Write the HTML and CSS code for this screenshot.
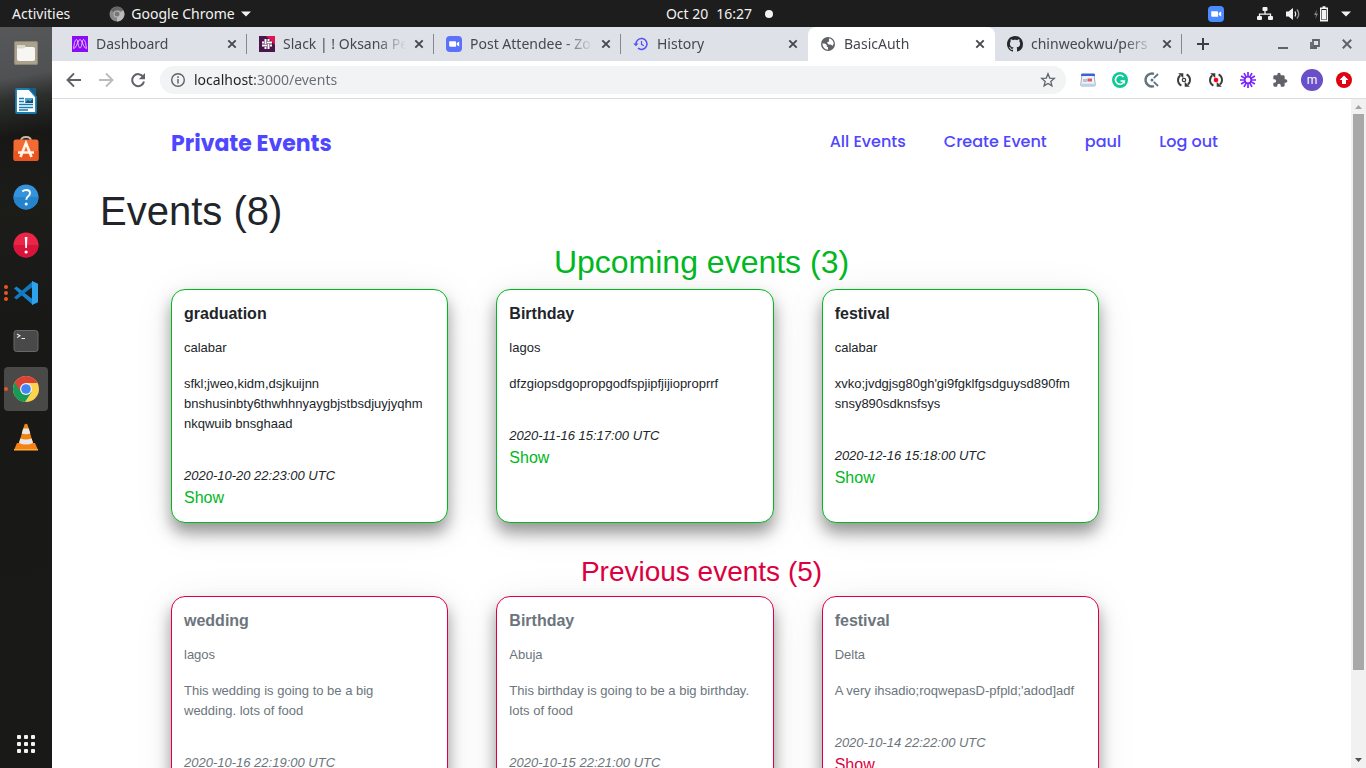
FILE: index.html
```html
<!DOCTYPE html>
<html lang="en">
<head>
<meta charset="utf-8">
<title>BasicAuth</title>
<link rel="stylesheet" href="styles.css">
</head>
<body>
<svg class="defs" aria-hidden="true">
  <symbol id="close" viewBox="0 0 10 10"><path d="M1.3 1.3l7.4 7.4M8.7 1.3L1.3 8.7" stroke="#45484d" stroke-width="1.9" fill="none"/></symbol>
  <symbol id="zoomcam" viewBox="0 0 16 16"><path d="M3.2 5.3h5.6c.8 0 1.3.5 1.3 1.3v4.2H4.600c-.8 0-1.400-.5-1.400-1.300zM10.800 7.100l2.400-1.700v5.200l-2.400-1.700z" fill="#fff"/></symbol>
  <symbol id="sync" viewBox="0 0 16 16"><path d="M5.400 13.700A6.200 6.200 0 0 1 4.200 3.400M10.600 2.300A6.200 6.200 0 0 1 11.800 12.600" fill="none" stroke="#3c3c3c" stroke-width="1.900"/><path d="M2.200 1.200h5.100v5.100zM13.800 14.800H8.700V9.700z" fill="#3c3c3c"/></symbol>
</svg>
<div class="desktop">
  <header class="topbar">
    <div class="topbar-left">
      <button class="topbar-button">Activities</button>
      <button class="topbar-button app-menu">
        <svg width="16" height="16" viewBox="0 0 16 16"><circle cx="8" cy="8" r="7.500" fill="#888"/><path d="M8 8l-6.500-3.700A7.500 7.500 0 0 1 14.500 4.500H8z" fill="#666"/><path d="M8 8l6.500-3.500A7.500 7.500 0 0 1 8 15.500z" fill="#bbb"/><circle cx="8" cy="8" r="3.500" fill="#bbb"/><circle cx="8" cy="8" r="2.500" fill="#777"/></svg>
        Google Chrome
        <svg width="10" height="6" viewBox="0 0 10 6"><path d="M0 .5h10L5 5.500z" fill="#f2f2f2"/></svg>
      </button>
    </div>
    <div class="clock"><span>Oct 20</span><time>16:27</time><i class="clock-dot"></i></div>
    <div class="tray">
      <svg class="tray-zoom" width="16" height="16" viewBox="0 0 16 16"><rect width="16" height="16" rx="4" fill="#4a8cff"/><use href="#zoomcam"/></svg>
      <svg width="16" height="14" viewBox="0 0 16 14"><path d="M8 3v4M2.500 10V7.200h11V10" fill="none" stroke="#f2f2f2" stroke-width="1.300"/><rect x="5.500" y="0" width="5" height="4" rx="1" fill="#f2f2f2"/><rect x="0" y="9" width="5" height="4" rx="1" fill="#f2f2f2"/><rect x="11" y="9" width="5" height="4" rx="1" fill="#f2f2f2"/></svg>
      <svg width="16" height="14" viewBox="0 0 16 14"><path d="M1 4.500h2.500L8 1v12L3.500 9.500H1z" fill="#f2f2f2"/><path d="M10 4.500q1.500 2.500 0 5" fill="none" stroke="#f2f2f2" stroke-width="1.300"/><path d="M12 2.500q3.500 4.500 0 9" fill="none" stroke="#999" stroke-width="1.300"/></svg>
      <svg width="16" height="16" viewBox="0 0 16 16"><path d="M4 3.500L1 9h2l-.7 4L5 7.500H3z" fill="#888"/><path d="M7.700 2.200h6.600v12.600H7.700zM9.500 1h3" fill="none" stroke="#f2f2f2" stroke-width="1.400"/><path d="M9 4h4v9.500H9z" fill="#f2f2f2"/></svg>
      <svg width="10" height="6" viewBox="0 0 10 6"><path d="M0 .5h10L5 5.500z" fill="#f2f2f2"/></svg>
    </div>
  </header>

  <nav class="dock" aria-label="Dock">
    <button class="dock-item" aria-label="Files"><svg width="26" height="26" viewBox="0 0 26 26"><rect x="1" y="1" width="24" height="24" rx="2.500" fill="#aaa18f"/><rect x="1.500" y="1.500" width="23" height="23" rx="2" fill="none" stroke="#8b8474"/><path d="M4 6.500Q4 5 5.500 5h5q1.500 0 2 2h7.500Q22 7 22 9v10q0 2-2 2H6q-2 0-2-2z" fill="#f8f6f2"/><path d="M4 8.500V6.500Q4 5 5.500 5h5q1.500 0 2 2-1.500 1.500-3 1.500z" fill="#ddd8cd"/></svg></button>
    <button class="dock-item" aria-label="Writer"><svg width="26" height="26" viewBox="0 0 26 26"><path d="M3 2q0-1 1-1h12l7 8v15q0 1-1 1H4q-1 0-1-1z" fill="#fff" stroke="#1a7bb0" stroke-width="1.800"/><path d="M15.500 0H23v7.500z" fill="#185f88"/><path d="M6 10.500h5M6 13.500h5M6 16.500h14M6 19.500h14M6 22h9" stroke="#1a7bb0" stroke-width="1.300"/><path d="M12 10h8v5h-8z" fill="#4da1cf"/><path d="M12 15l3-3 2 1.500L20 11v4z" fill="#135374"/></svg></button>
    <button class="dock-item" aria-label="Software"><svg width="26" height="26" viewBox="0 0 26 26"><path d="M8 5q0-4 5-4t5 4" fill="none" stroke="#c9bd9f" stroke-width="1.800"/><rect x="0.500" y="3.500" width="25" height="21.500" rx="2.500" fill="#f36b32"/><path d="M.5 15h25v7.500q0 2.500-2.500 2.500H3Q.5 25 .5 22.500z" fill="#e95420"/><path d="M7.500 21l5.500-14 5.500 14M5 16.500h16" fill="none" stroke="#fff4e8" stroke-width="2.600"/></svg></button>
    <button class="dock-item" aria-label="Help"><svg width="26" height="26" viewBox="0 0 26 26"><circle cx="13" cy="13" r="12.500" fill="#3593de"/><path d="M.5 13a12.500 12.500 0 0 0 25 0z" fill="#2583cc"/><path d="M9.300 7.500q1.700-1.500 4-1.500 3.700 0 3.700 3.200 0 1.800-2 3.300-1.700 1.300-1.700 3.300" fill="none" stroke="#fff" stroke-width="1.900"/><circle cx="13.200" cy="20" r="1.500" fill="#fff"/></svg></button>
    <button class="dock-item" aria-label="Problem report"><svg width="26" height="26" viewBox="0 0 26 26"><circle cx="13" cy="13" r="12.500" fill="#e92548"/><path d="M.5 13a12.500 12.500 0 0 0 25 0z" fill="#d8143a"/><path d="M11.800 5h2.600l-.5 11h-1.600z" fill="#fff"/><circle cx="13.100" cy="20" r="1.600" fill="#fff"/></svg></button>
    <button class="dock-item" aria-label="Visual Studio Code"><span class="dots"><i></i><i></i><i></i></span><svg width="26" height="26" viewBox="0 0 26 26"><path d="M1 8.500l2.500-2L20 19v6z" fill="#1583cd"/><path d="M1 17.500l2.500 2L20 7V1z" fill="#1079c0"/><path d="M19 1l6 2.800v18.400L19 25z" fill="#2ea3ec"/><path d="M19 7.500v11L11.500 13z" fill="#1b1b1a"/></svg></button>
    <button class="dock-item" aria-label="Terminal"><svg width="26" height="26" viewBox="0 0 26 26"><rect x="1" y="2.500" width="24" height="21" rx="2.500" fill="#494949" stroke="#686868"/><path d="M4 6l3 1.800L4 9.600M8.500 10.500H12" fill="none" stroke="#eee" stroke-width="1.100"/></svg></button>
    <button class="dock-item dock-item-active" aria-label="Google Chrome"><span class="dots"><i></i></span><svg width="26" height="26" viewBox="0 0 26 26"><circle cx="13" cy="13" r="13" fill="#fcd24f"/><path d="M13 13L1.700 6.600A13 13 0 0 0 12 26l6.500-10z" fill="#159b57"/><path d="M13 7h11.500A13 13 0 0 0 1.700 6.600l5.500 8.500z" fill="#da4437"/><circle cx="13" cy="13" r="6" fill="#f4f4f4"/><circle cx="13" cy="13" r="4.800" fill="#4285f4"/></svg></button>
    <button class="dock-item" aria-label="VLC"><svg width="26" height="28" viewBox="0 0 26 28"><path d="M4 20h18l3 7H1z" fill="#f58216"/><path d="M1 26h24v1.500H1z" fill="#ffae35"/><path d="M11.500 1.500q1.500-1.500 3 0L20 20q-7 3-14 0z" fill="#f28313"/><path d="M10.200 5.500h5.600l1.500 5q-4.300 1.500-8.600 0zM7.300 15.500q5.700 2 11.400 0l1.300 4.500q-7 3-14 0z" fill="#e8e8e8"/></svg></button>
    <button class="dock-item dock-apps" aria-label="Show applications"><svg width="20" height="20" viewBox="0 0 20 20" fill="#f2f2f2"><rect x="1" y="1" width="4" height="4" rx="1"/><rect x="8" y="1" width="4" height="4" rx="1"/><rect x="15" y="1" width="4" height="4" rx="1"/><rect x="1" y="8" width="4" height="4" rx="1"/><rect x="8" y="8" width="4" height="4" rx="1"/><rect x="15" y="8" width="4" height="4" rx="1"/><rect x="1" y="15" width="4" height="4" rx="1"/><rect x="8" y="15" width="4" height="4" rx="1"/><rect x="15" y="15" width="4" height="4" rx="1"/></svg></button>
  </nav>

  <div class="browser">
    <div class="tabstrip">
      <div class="tab tab-sep">
        <svg width="16" height="16" viewBox="0 0 16 16"><path d="M0 0h16v16H0z" fill="#8c0cf5"/><path d="M1.500 12.500C2.200 8 3 3.500 4.500 3.500S6 12 8 12s2-8.500 3.500-8.500 2.300 4.500 3 9M1.500 12.500c3 0 4.500-9 6.500-9s3.500 9 6.500 9" fill="none" stroke="#e9d0ff" stroke-width=".9"/></svg>
        <span class="tab-title">Dashboard</span>
        <button class="tab-close" aria-label="Close tab"><svg width="10" height="10"><use href="#close"/></svg></button>
      </div>
      <div class="tab tab-sep">
        <svg width="16" height="16" viewBox="0 0 16 16"><path d="M0 0h16v16H0z" fill="#4a154b"/><path d="M7 0h9v9z" fill="#de1453"/><path d="M6.500 3v5M9.500 8v5M3 9.500h5M8 6.500h5M9.500 3v2M6.500 11v2M3 6.500h2M11 9.500h2" stroke="#fff" stroke-width="2"/></svg>
        <span class="tab-title">Slack | ! Oksana Pe</span>
        <button class="tab-close" aria-label="Close tab"><svg width="10" height="10"><use href="#close"/></svg></button>
      </div>
      <div class="tab tab-sep">
        <svg width="16" height="16" viewBox="0 0 16 16"><rect width="16" height="16" rx="4" fill="#5b71fb"/><use href="#zoomcam"/></svg>
        <span class="tab-title">Post Attendee - Zo</span>
        <button class="tab-close" aria-label="Close tab"><svg width="10" height="10"><use href="#close"/></svg></button>
      </div>
      <div class="tab">
        <svg width="16" height="16" viewBox="0 0 16 16"><path d="M3 8.500A5.500 5.500 0 1 1 5 12.200" fill="none" stroke="#5450f5" stroke-width="1.500"/><path d="M.2 7.500h5.300L2.900 10.300z" fill="#5450f5"/><path d="M8.500 5v3.300l2.300 1.500" fill="none" stroke="#5450f5" stroke-width="1.200"/></svg>
        <span class="tab-title">History</span>
        <button class="tab-close" aria-label="Close tab"><svg width="10" height="10"><use href="#close"/></svg></button>
      </div>
      <div class="tab tab-active">
        <svg width="16" height="16" viewBox="0 0 16 16"><circle cx="8" cy="8" r="7" fill="#5f6368"/><path d="M2.300 7.500h2.500l2 1.500v2H8v2.800Q3 13.500 2.300 7.500zM9 2.200q4 1 4.700 5.300l-1 2.200-2-1.200H8.500L7 6.500l2-1z" fill="#fff"/></svg>
        <span class="tab-title">BasicAuth</span>
        <button class="tab-close" aria-label="Close tab"><svg width="10" height="10"><use href="#close"/></svg></button>
      </div>
      <div class="tab tab-sep">
        <svg width="16" height="16" viewBox="0 0 16 16"><path fill="#24292e" d="M8 0C3.580 0 0 3.580 0 8c0 3.540 2.290 6.530 5.470 7.590.4.070.55-.17.55-.38 0-.19-.01-.82-.01-1.490-2.010.37-2.530-.49-2.690-.94-.09-.23-.48-.94-.82-1.130-.28-.15-.68-.52-.01-.53.63-.01 1.080.58 1.230.82.72 1.210 1.870.87 2.330.66.07-.52.28-.87.51-1.070-1.780-.2-3.640-.89-3.640-3.950 0-.87.31-1.590.82-2.150-.08-.2-.36-1.020.08-2.120 0 0 .67-.21 2.200.82.64-.18 1.320-.27 2-.27s1.360.09 2 .27c1.530-1.040 2.200-.82 2.200-.82.44 1.100.16 1.920.08 2.120.51.56.82 1.270.82 2.150 0 3.070-1.870 3.750-3.650 3.950.29.25.54.73.54 1.480 0 1.070-.01 1.930-.01 2.200 0 .21.15.46.55.38A8.010 8.010 0 0 0 16 8c0-4.420-3.580-8-8-8z"/></svg>
        <span class="tab-title">chinweokwu/pers</span>
        <button class="tab-close" aria-label="Close tab"><svg width="10" height="10"><use href="#close"/></svg></button>
      </div>
      <button class="icon-button new-tab" aria-label="New tab"><svg width="12" height="12" viewBox="0 0 12 12"><path d="M6 0v12M0 6h12" stroke="#3c4043" stroke-width="2"/></svg></button>
      <div class="window-controls">
        <button class="icon-button" aria-label="Minimize"><svg width="10" height="10" viewBox="0 0 10 10"><path d="M0 9h10" stroke="#5f6368" stroke-width="2"/></svg></button>
        <button class="icon-button" aria-label="Restore"><svg width="10" height="10" viewBox="0 0 10 10"><path d="M3 1h6v6H3zM1 3v6h6" fill="none" stroke="#5f6368" stroke-width="1.800"/></svg></button>
        <button class="icon-button" aria-label="Close window"><svg width="10" height="10" viewBox="0 0 10 10"><path d="M.8.8l8.400 8.400M9.200.8L.8 9.200" stroke="#5f6368" stroke-width="2"/></svg></button>
      </div>
    </div>

    <div class="toolbar">
      <div class="toolbar-nav">
        <button class="icon-button" aria-label="Back"><svg width="16" height="16" viewBox="0 0 16 16"><path d="M15 8H2M8 1.500L1.500 8 8 14.500" fill="none" stroke="#5f6368" stroke-width="1.900"/></svg></button>
        <button class="icon-button" aria-label="Forward" disabled><svg width="16" height="16" viewBox="0 0 16 16"><path d="M1 8h13M8 1.500L14.500 8 8 14.500" fill="none" stroke="#babcbe" stroke-width="1.900"/></svg></button>
        <button class="icon-button" aria-label="Reload"><svg width="16" height="16" viewBox="0 0 16 16"><path d="M13.300 5A6 6 0 1 0 14 9.500" fill="none" stroke="#5f6368" stroke-width="2"/><path d="M15 1v6.200H8.800z" fill="#5f6368"/></svg></button>
      </div>
      <div class="omnibox">
        <svg width="16" height="16" viewBox="0 0 16 16"><circle cx="8" cy="8" r="6.300" fill="none" stroke="#5f6368" stroke-width="1.400"/><path d="M8 7v4.500M8 4.300v1.600" stroke="#5f6368" stroke-width="1.500"/></svg>
        <input class="url" type="text" aria-label="Address" value="localhost:3000/events">
        <button class="star" aria-label="Bookmark"><svg width="16" height="16" viewBox="0 0 16 16"><path d="M8 1.800l1.700 4.300 4.600.3-3.500 3 1.100 4.500L8 11.400l-3.900 2.500 1.100-4.500-3.500-3 4.600-.3z" fill="none" stroke="#5f6368" stroke-width="1.300"/></svg></button>
      </div>
      <div class="extensions">
        <button class="icon-button" aria-label="Calendar"><svg width="16" height="16" viewBox="0 0 16 16"><path d="M2 2.500h12l1.300 10.500q0 1-1 1H1.700q-1 0-1-1z" fill="#eef3fb" stroke="#9fb0c6"/><path d="M2 1.500h12q1 0 1 1.500v1H1V3q0-1.500 1-1.500z" fill="#3a62d4"/><path d="M3 7h4v3H3z" fill="#c2c0ca"/><path d="M7.500 6.500h4.500v3H7.500z" fill="#de5a64"/><path d="M2 12.500h12" stroke="#b4d3ec" stroke-width="1.500"/></svg></button>
        <button class="icon-button" aria-label="Grammarly"><svg width="16" height="16" viewBox="0 0 16 16"><circle cx="8" cy="8" r="8" fill="#11c998"/><path d="M11.500 5A4.500 4.500 0 1 0 12.300 9H8.500" fill="none" stroke="#fff" stroke-width="1.600"/><path d="M10 9h3v3z" fill="#fff"/></svg></button>
        <button class="icon-button" aria-label="Clockify"><svg width="16" height="16" viewBox="0 0 16 16"><path d="M10 1.800A6.500 6.500 0 1 0 10 14.200" fill="none" stroke="#607481" stroke-width="2.400"/><path d="M9.800 6.200L14 2M9.800 9.800L14 14" stroke="#607481" stroke-width="1.800"/><circle cx="8" cy="8" r="1.500" fill="#607481"/></svg></button>
        <button class="icon-button" aria-label="Recorder"><svg width="16" height="16" viewBox="0 0 16 16"><use href="#sync"/><circle cx="8" cy="8" r="1.700" fill="none" stroke="#3c3c3c" stroke-width="1.200"/></svg></button>
        <button class="icon-button" aria-label="Recording"><svg width="16" height="16" viewBox="0 0 16 16"><use href="#sync"/><circle cx="8" cy="8" r="2.300" fill="#f00"/></svg></button>
        <button class="icon-button" aria-label="Loom"><svg width="16" height="16" viewBox="0 0 16 16"><path d="M8 0v16M0 8h16M4 1.070l8 13.860M1.070 4l13.860 8M12 1.070L4 14.930M14.930 4L1.070 12" stroke="#7d22ff" stroke-width="1.700"/><circle cx="8" cy="8" r="3.200" fill="#fff" stroke="#7d22ff" stroke-width="1.600"/></svg></button>
        <button class="icon-button" aria-label="Extensions"><svg width="16" height="16" viewBox="0 0 24 24"><path fill="#5f6368" d="M20.500 11H19V7c0-1.100-.9-2-2-2h-4V3.500a2.500 2.500 0 0 0-5 0V5H4c-1.100 0-2 .9-2 2v3.800h1.500a2.700 2.700 0 0 1 0 5.400H2V20c0 1.100.9 2 2 2h3.800v-1.500a2.700 2.700 0 0 1 5.400 0V22H17c1.100 0 2-.9 2-2v-4h1.500a2.500 2.500 0 0 0 0-5z"/></svg></button>
        <button class="icon-button" aria-label="Profile"><span class="avatar">m</span></button>
        <button class="icon-button" aria-label="Update"><svg width="16" height="16" viewBox="0 0 16 16"><circle cx="8" cy="8" r="8" fill="#e00012"/><path d="M8 3.500L12.500 8H10v4H6V8H3.500z" fill="#fff"/></svg></button>
      </div>
    </div>

    <div class="viewport">
      <div class="page">
        <nav class="site-nav">
          <a class="brand" href="#">Private Events</a>
          <div class="site-links">
            <a href="#">All Events</a>
            <a href="#">Create Event</a>
            <a href="#">paul</a>
            <a href="#">Log out</a>
          </div>
        </nav>
        <main>
          <h1>Events (8)</h1>
          <section class="upcoming">
            <h2>Upcoming events (3)</h2>
            <div class="cards">
              <article class="card">
                <h4>graduation</h4>
                <p>calabar</p>
                <p class="description">sfkl;jweo,kidm,dsjkuijnn bnshusinbty6thwhhnyaygbjstbsdjuyjyqhm nkqwuib bnsghaad</p>
                <em>2020-10-20 22:23:00 UTC</em>
                <a href="#">Show</a>
              </article>
              <article class="card">
                <h4>Birthday</h4>
                <p>lagos</p>
                <p class="description">dfzgiopsdgopropgodfspjipfjijioproprrf</p>
                <em>2020-11-16 15:17:00 UTC</em>
                <a href="#">Show</a>
              </article>
              <article class="card">
                <h4>festival</h4>
                <p>calabar</p>
                <p class="description">xvko;jvdgjsg80gh'gi9fgklfgsdguysd890fm snsy890sdknsfsys</p>
                <em>2020-12-16 15:18:00 UTC</em>
                <a href="#">Show</a>
              </article>
            </div>
          </section>
          <section class="previous">
            <h3>Previous events (5)</h3>
            <div class="cards">
              <article class="card">
                <h4>wedding</h4>
                <p>lagos</p>
                <p class="description">This wedding is going to be a big wedding. lots of food</p>
                <em>2020-10-16 22:19:00 UTC</em>
                <a href="#">Show</a>
              </article>
              <article class="card">
                <h4>Birthday</h4>
                <p>Abuja</p>
                <p class="description">This birthday is going to be a big birthday. lots of food</p>
                <em>2020-10-15 22:21:00 UTC</em>
                <a href="#">Show</a>
              </article>
              <article class="card">
                <h4>festival</h4>
                <p>Delta</p>
                <p class="description">A very ihsadio;roqwepasD-pfpld;'adod]adf</p>
                <em>2020-10-14 22:22:00 UTC</em>
                <a href="#">Show</a>
              </article>
            </div>
          </section>
        </main>
      </div>
      <div class="scrollbar" aria-hidden="true">
        <svg width="15" height="15" viewBox="0 0 15 15"><path d="M4 10h7L7.500 6z" fill="#a3a3a3"/></svg>
        <div class="scroll-track"><div class="scroll-thumb"></div></div>
        <svg width="15" height="15" viewBox="0 0 15 15"><path d="M4 5h7L7.500 9z" fill="#505050"/></svg>
      </div>
    </div>
  </div>
</div>
</body>
</html>
```
FILE: styles.css
```css
* { box-sizing: border-box; }
body { margin: 0; font-family: "Liberation Sans", Arial, sans-serif; color: #212529; }
button { border: 0; padding: 0; background: none; font: inherit; color: inherit; }
svg { display: block; flex: none; }
a { text-decoration: none; }
.defs { display: none; }

.desktop {
  display: grid;
  grid-template: 27px minmax(0, 1fr) / 52px minmax(0, 1fr);
  height: 100vh;
  overflow: hidden;
}

/* System bar */
.topbar {
  grid-column: 1 / -1;
  display: grid;
  grid-template-columns: 1fr auto 1fr;
  align-items: center;
  padding: 0 15px 0 12px;
  background: #1d1d1d;
  color: #f2f2f2;
  font: 14px/20px "Noto Sans", sans-serif;
}
.topbar-left { display: flex; gap: 39px; }
.topbar-button { display: flex; align-items: center; gap: 6px; }
.clock { display: flex; align-items: center; gap: 8px; padding-left: 76px; white-space: nowrap; }
.clock-dot { width: 8px; height: 8px; margin-left: 5px; border-radius: 50%; background: #f2f2f2; }
.tray { display: flex; align-items: center; justify-content: flex-end; gap: 12px; }
.tray-zoom { margin-right: 21px; }

/* Dock */
.dock {
  display: flex;
  flex-direction: column;
  align-items: center;
  gap: 4px;
  padding: 4px 0 2px;
  background: linear-gradient(170deg, #57585a 0, #505153 52px, #2c2f2c 74px, #171716 110px, #1c1c19 180px, #181817 300px, #191918 100%);
}
.dock-item {
  position: relative;
  display: flex;
  align-items: center;
  justify-content: center;
  width: 44px;
  height: 44px;
  border-radius: 4px;
}
.dock-item-active { background: #494947; }
.dock-apps { margin-top: auto; }
.dots { position: absolute; left: 0; display: grid; gap: 2px; }
.dots i { width: 4px; height: 4px; border-radius: 50%; background: #e95420; }

/* Browser frame */
.browser { display: flex; flex-direction: column; min-height: 0; background: #fff; }
.tabstrip { display: flex; height: 34px; padding-left: 8px; background: #dee1e8; flex: none; }
.tab {
  position: relative;
  display: flex;
  align-items: center;
  gap: 8px;
  flex: 0 1 187px;
  min-width: 0;
  padding: 0 10px 0 12px;
  color: #45484d;
  font: 14px/20px "Noto Sans", sans-serif;
}
.tab-sep::after { content: ""; position: absolute; right: 0; top: 7px; width: 1px; height: 20px; background: #85888e; }
.tab-active { background: #fff; border-radius: 8px 8px 0 0; }
.tab-title {
  flex: 1;
  min-width: 0;
  white-space: nowrap;
  mask-image: linear-gradient(90deg, #000 76%, transparent);
}
.tab-close { display: grid; place-items: center; width: 10px; height: 20px; }
.icon-button { display: grid; place-items: center; width: 32px; height: 100%; }
.new-tab { margin-left: 5px; }
.window-controls { display: flex; margin-left: auto; padding-right: 3px; }
.toolbar { display: flex; align-items: center; height: 38px; padding: 0 6px; border-bottom: 1px solid #dcdce4; flex: none; }
.toolbar-nav { display: flex; padding-right: 6px; }
.omnibox {
  flex: 1;
  display: flex;
  align-items: center;
  gap: 8px;
  height: 28px;
  padding: 0 10px;
  border-radius: 14px;
  background: #f1f3f4;
}
.url {
  flex: 1;
  min-width: 0;
  padding: 0;
  border: 0;
  outline: 0;
  font: 14px/20px "Noto Sans", sans-serif;
  color: transparent;
  background: linear-gradient(90deg, #202124 61px, #686c71 61px) text;
}
.extensions { display: flex; padding-left: 6px; }
.extensions .icon-button { height: 28px; }
.avatar {
  display: grid;
  place-items: center;
  width: 22px;
  height: 22px;
  border-radius: 50%;
  background: #6a50c8;
  color: #fff;
  font: 12px/20px Roboto, sans-serif;
}

/* Web page */
.viewport { display: flex; flex: 1; min-height: 0; }
.page { flex: 1; min-width: 0; overflow: hidden; }
.site-nav {
  display: flex;
  align-items: flex-start;
  justify-content: space-between;
  height: 88px;
  padding: 28px 133px 0 119px;
  font-family: Poppins, Inter, sans-serif;
}
.site-nav a { color: #4f46ff; }
.brand { font-size: 22px; font-weight: 700; line-height: 33px; }
.site-links { display: flex; gap: 38px; font-size: 16px; font-weight: 500; line-height: 30px; }
h1, h2, h3, h4, p { margin: 0; }
h1, h2, h3 { font-weight: 400; }
h1 { margin: 0 48px 8px; font-size: 40px; line-height: 48px; }
h2 { font-size: 32px; line-height: 38px; }
h3 { font-size: 28px; line-height: 33px; }
h2, h3 { margin-bottom: 8px; text-align: center; }
.upcoming { --accent: #00b822; margin-bottom: 32px; }
.previous { --accent: #dc0041; }
h2, h3, .card a { color: var(--accent); }
.cards {
  display: grid;
  grid-template-columns: repeat(3, minmax(0, 1fr));
  gap: 48px;
  padding: 0 252px 0 119px;
}
.card {
  display: flex;
  flex-direction: column;
  align-items: flex-start;
  padding: 12px;
  border: 1px solid var(--accent);
  border-radius: 14px;
  background: #fff;
  box-shadow: 0 10px 16px rgba(0, 0, 0, .38), 0 6px 40px rgba(0, 0, 0, .08);
  font-size: 13px;
  line-height: 20px;
}
.previous .card { color: #6c757d; }
.card h4 { margin-bottom: 12px; font-size: 16px; line-height: 24px; }
.card p { margin-bottom: 16px; }
.card .description { margin-bottom: 32px; padding-right: 8px; }
.card a { font-size: 16px; line-height: 24px; }

/* Page scrollbar */
.scrollbar { display: flex; flex-direction: column; width: 15px; background: #f1f1f1; }
.scroll-track { flex: 1; padding: 0 2px; }
.scroll-thumb { height: 87%; background: #a8a8a8; }
```
